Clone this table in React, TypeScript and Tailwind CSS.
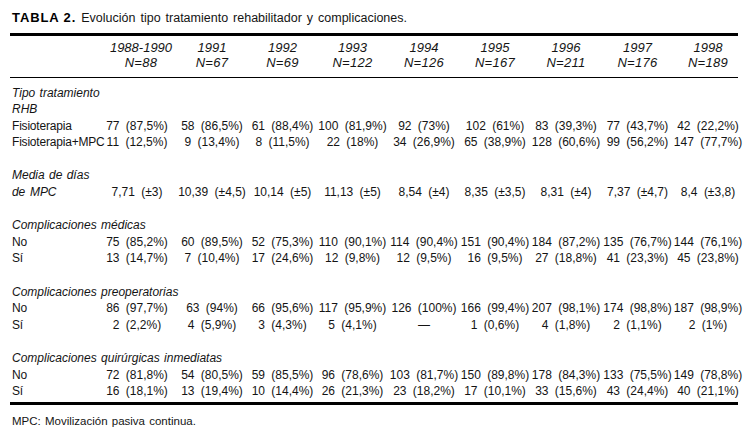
import React from "react";

const GRID =
  "grid grid-cols-[88px_78px_72px_69px_71px_72px_70px_72px_71px_70px]";

const headers: [string, string][] = [
  ["1988-1990", "N=88"],
  ["1991", "N=67"],
  ["1992", "N=69"],
  ["1993", "N=122"],
  ["1994", "N=126"],
  ["1995", "N=167"],
  ["1996", "N=211"],
  ["1997", "N=176"],
  ["1998", "N=189"],
];

type Row =
  | { kind: "group"; label: string }
  | { kind: "blank" }
  | { kind: "data"; label: string; italic?: boolean; values: string[] };

const rows: Row[] = [
  { kind: "group", label: "Tipo tratamiento" },
  { kind: "group", label: "RHB" },
  {
    kind: "data",
    label: "Fisioterapia",
    values: [
      "77 (87,5%)",
      "58 (86,5%)",
      "61 (88,4%)",
      "100 (81,9%)",
      "92 (73%)",
      "102 (61%)",
      "83 (39,3%)",
      "77 (43,7%)",
      "42 (22,2%)",
    ],
  },
  {
    kind: "data",
    label: "Fisioterapia+MPC",
    values: [
      "11 (12,5%)",
      "9 (13,4%)",
      "8 (11,5%)",
      "22 (18%)",
      "34 (26,9%)",
      "65 (38,9%)",
      "128 (60,6%)",
      "99 (56,2%)",
      "147 (77,7%)",
    ],
  },
  { kind: "blank" },
  { kind: "group", label: "Media de días" },
  {
    kind: "data",
    label: "de MPC",
    italic: true,
    values: [
      "7,71 (±3)",
      "10,39 (±4,5)",
      "10,14 (±5)",
      "11,13 (±5)",
      "8,54 (±4)",
      "8,35 (±3,5)",
      "8,31 (±4)",
      "7,37 (±4,7)",
      "8,4 (±3,8)",
    ],
  },
  { kind: "blank" },
  { kind: "group", label: "Complicaciones médicas" },
  {
    kind: "data",
    label: "No",
    values: [
      "75 (85,2%)",
      "60 (89,5%)",
      "52 (75,3%)",
      "110 (90,1%)",
      "114 (90,4%)",
      "151 (90,4%)",
      "184 (87,2%)",
      "135 (76,7%)",
      "144 (76,1%)",
    ],
  },
  {
    kind: "data",
    label: "Sí",
    values: [
      "13 (14,7%)",
      "7 (10,4%)",
      "17 (24,6%)",
      "12 (9,8%)",
      "12 (9,5%)",
      "16 (9,5%)",
      "27 (18,8%)",
      "41 (23,3%)",
      "45 (23,8%)",
    ],
  },
  { kind: "blank" },
  { kind: "group", label: "Complicaciones preoperatorias" },
  {
    kind: "data",
    label: "No",
    values: [
      "86 (97,7%)",
      "63 (94%)",
      "66 (95,6%)",
      "117 (95,9%)",
      "126 (100%)",
      "166 (99,4%)",
      "207 (98,1%)",
      "174 (98,8%)",
      "187 (98,9%)",
    ],
  },
  {
    kind: "data",
    label: "Sí",
    values: [
      "2 (2,2%)",
      "4 (5,9%)",
      "3 (4,3%)",
      "5 (4,1%)",
      "—",
      "1 (0,6%)",
      "4 (1,8%)",
      "2 (1,1%)",
      "2 (1%)",
    ],
  },
  { kind: "blank" },
  { kind: "group", label: "Complicaciones quirúrgicas inmediatas" },
  {
    kind: "data",
    label: "No",
    values: [
      "72 (81,8%)",
      "54 (80,5%)",
      "59 (85,5%)",
      "96 (78,6%)",
      "103 (81,7%)",
      "150 (89,8%)",
      "178 (84,3%)",
      "133 (75,5%)",
      "149 (78,8%)",
    ],
  },
  {
    kind: "data",
    label: "Sí",
    values: [
      "16 (18,1%)",
      "13 (19,4%)",
      "10 (14,4%)",
      "26 (21,3%)",
      "23 (18,2%)",
      "17 (10,1%)",
      "33 (15,6%)",
      "43 (24,4%)",
      "40 (21,1%)",
    ],
  },
];

export default function App() {
  return (
    <div className="w-[750px] h-[433px] overflow-hidden bg-white pl-[10px] pt-[7px] font-['Liberation_Sans',Arial,sans-serif] text-[#141414]">
      <div className="w-[728px]">
        <div className="h-[20px] pl-[2px] leading-[20px] whitespace-nowrap">
          <span className="text-[13px] font-bold tracking-[0.9px] text-black">
            TABLA 2.
          </span>
          <span className="ml-[5px] text-[12.5px] [word-spacing:1.5px]">
            Evolución tipo tratamiento rehabilitador y complicaciones.
          </span>
        </div>
        <div className="mt-[6px] h-[3px] bg-black" />
        <div className={`${GRID} pt-[3.5px] pb-[7px] text-[13px] italic leading-[15px]`}>
          <div />
          {headers.map(([y, n], i) => (
            <div
              key={y}
              className={`flex flex-col items-center ${i === 0 ? "pl-[8px]" : ""}`}
            >
              <span>{y}</span>
              <span className="tracking-[0.3px]">{n}</span>
            </div>
          ))}
        </div>
        <div className="h-px bg-black" />
        <div className="pt-[7px] text-[12px] leading-[16.6px]">
          {rows.map((r, idx) => {
            if (r.kind === "blank") return <div key={idx} className="h-[16.6px]" />;
            if (r.kind === "group")
              return (
                <div
                  key={idx}
                  className="h-[16.6px] pl-[2px] italic whitespace-nowrap [word-spacing:1px]"
                >
                  {r.label}
                </div>
              );
            return (
              <div key={idx} className={`${GRID} h-[16.6px]`}>
                <div
                  className={`pl-[2px] whitespace-nowrap tracking-[-0.2px] ${r.italic ? "italic [word-spacing:2px]" : ""}`}
                >
                  {r.label}
                </div>
                {r.values.map((v, i) => (
                  <div
                    key={i}
                    className="text-center whitespace-nowrap [word-spacing:3px]"
                  >
                    {v}
                  </div>
                ))}
              </div>
            );
          })}
        </div>
        <div className="mt-[2px] h-[3px] bg-black" />
        <div className="pt-[9px] pl-[2px] text-[11.5px] leading-[14px] [word-spacing:1px]">
          MPC: Movilización pasiva continua.
        </div>
      </div>
    </div>
  );
}
